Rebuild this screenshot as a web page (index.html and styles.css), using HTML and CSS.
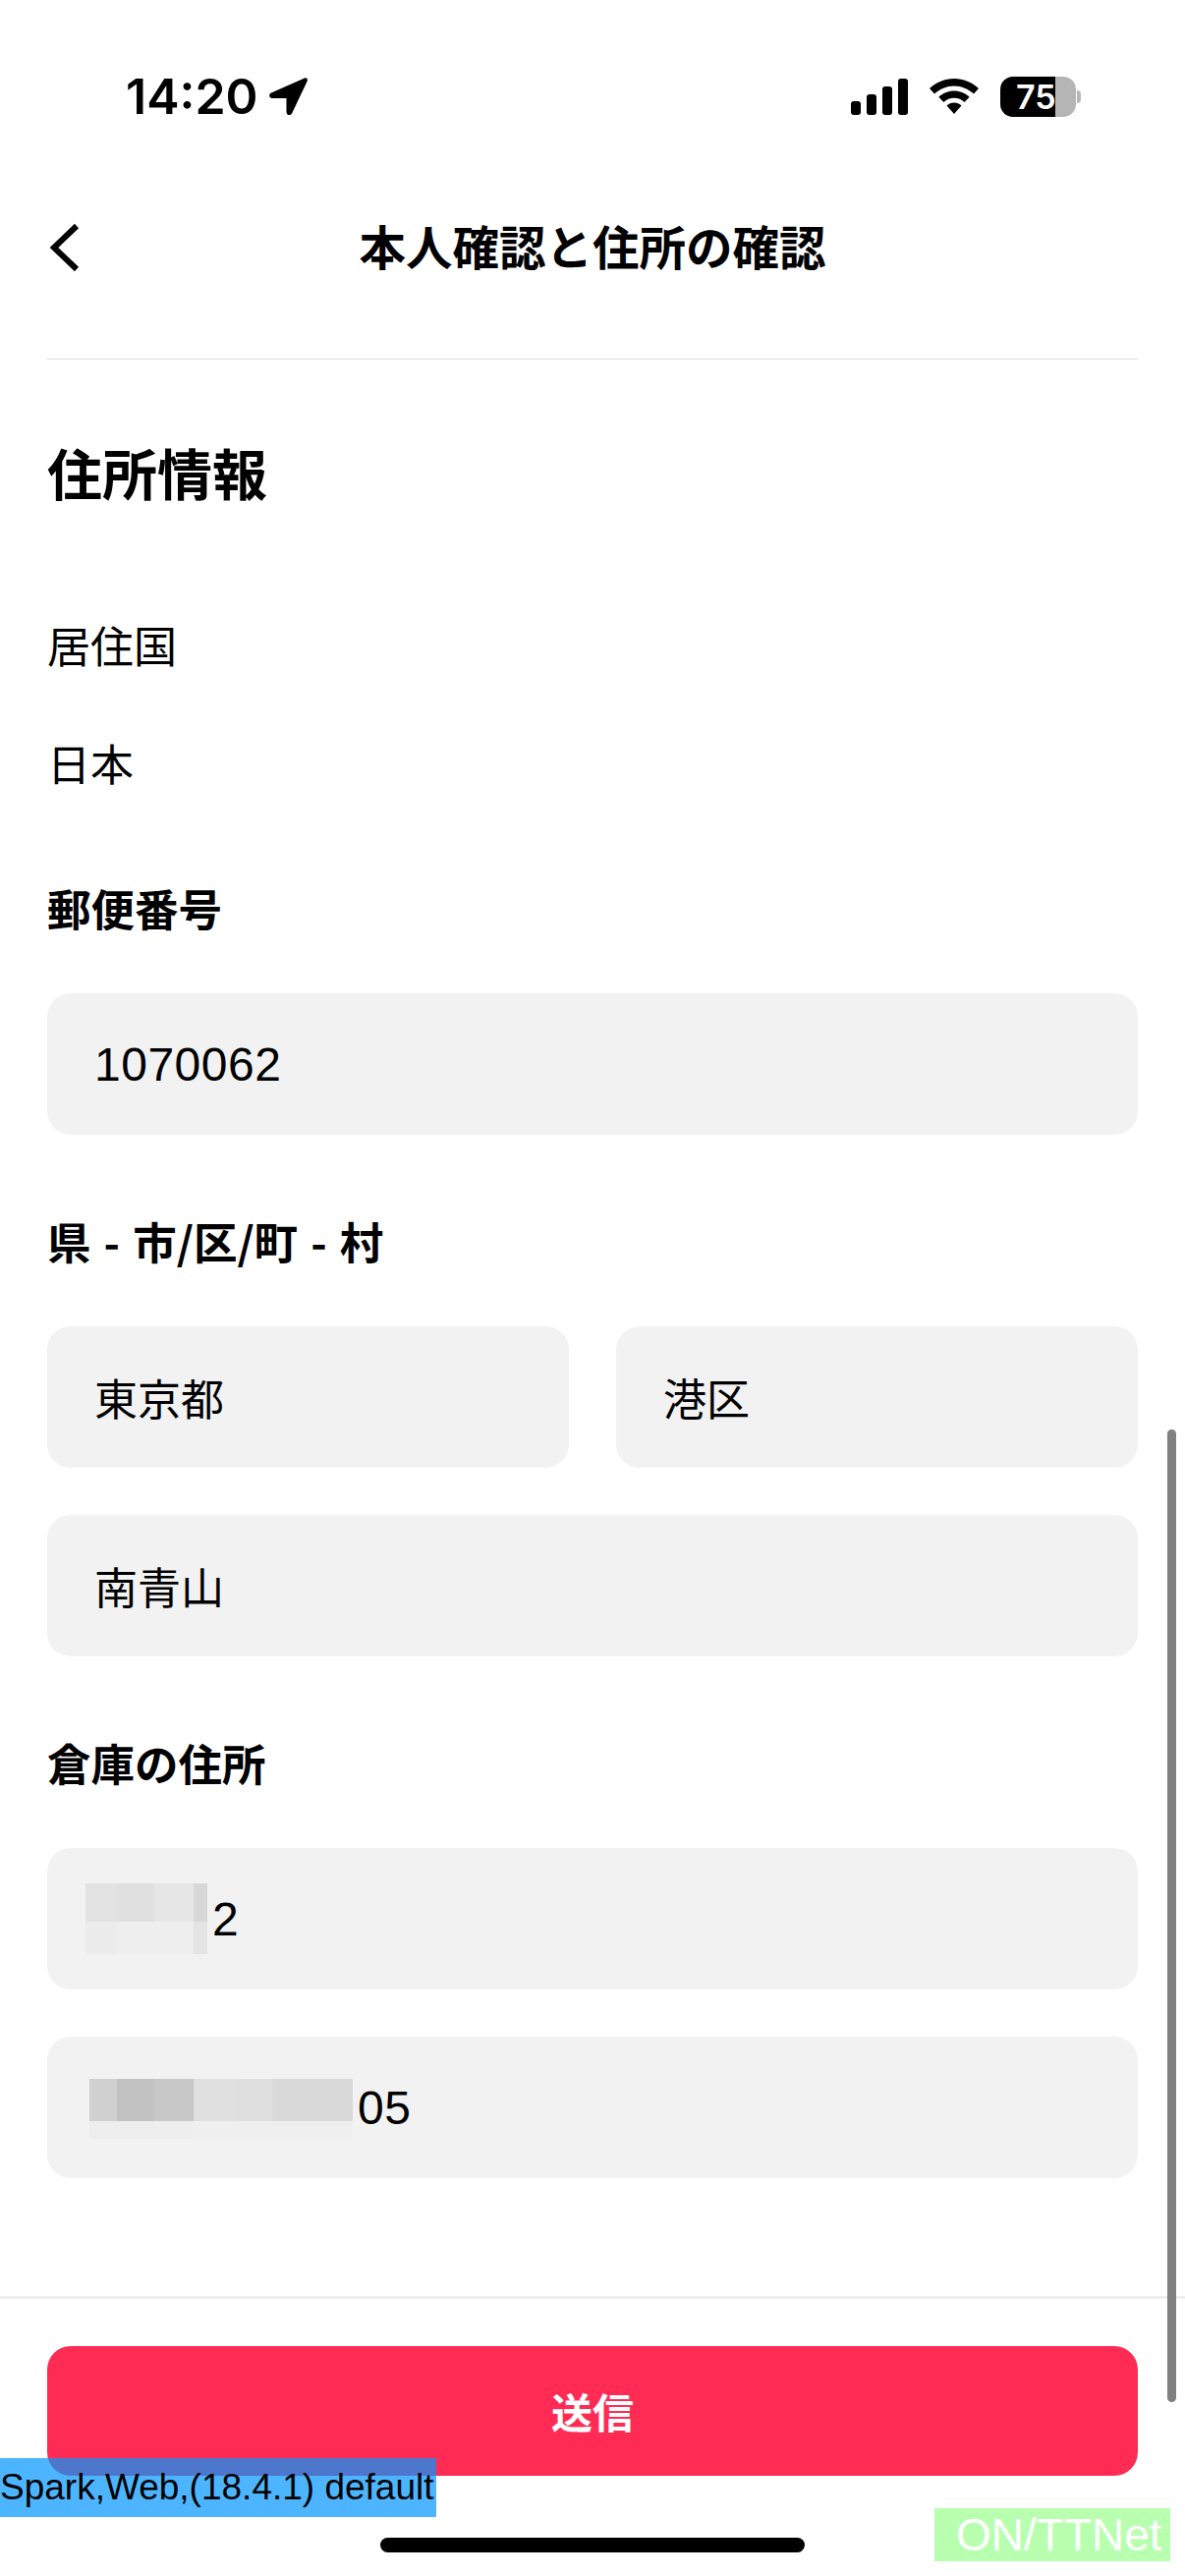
FILE: index.html
```html
<!DOCTYPE html>
<html lang="ja">

    <head>
        <meta charset="UTF-8">
        <meta name="viewport" content="width=device-width, initial-scale=1.0">
        <title>本人確認と住所の確認</title>
        <link rel="stylesheet" href="styles.css">
    </head>

    <body>
        <div class="page">
            <div class="status">
                <div class="status-left">
                    <span class="time">14:20</span>
                    <svg class="arrow" viewBox="0 0 39 38"><path d="M36 .5 2 15.500C-.8 16.800-.2 21 2.800 21H17.500v14c0 3.500 4.500 4.300 5.800 1L38.700 3.500C39.500 1.500 38-.4 36 .5z"/></svg>
                </div>
                <div class="status-right">
                    <svg class="signal" viewBox="0 0 58 37">
                        <rect x="0" y="23" width="10" height="14" rx="3"/>
                        <rect x="16" y="16" width="10" height="21" rx="3"/>
                        <rect x="32" y="8" width="10" height="29" rx="3"/>
                        <rect x="48" y="0" width="10" height="37" rx="3"/>
                    </svg>
                    <svg class="wifi" viewBox="0 0 50 36">
                        <path d="M25 0C15.500 0 7 3.700 0 10l5 5.500C10.500 10.500 17.500 7.500 25 7.500s14.500 3 20 8l5-5.500C43 3.700 34.500 0 25 0z"/>
                        <path d="M25 12.500c-6 0-11.500 2.400-15.600 6.200l5 5.300c2.900-2.700 6.500-4.200 10.600-4.200s7.700 1.500 10.600 4.200l5-5.300C36.500 14.900 31 12.500 25 12.500z"/>
                        <path d="M25 24.500c-3 0-5.500 1-7.500 2.900L25 36l7.500-8.600c-2-1.900-4.500-2.900-7.500-2.900z"/>
                    </svg>
                    <div class="battery">
                        <div class="battery-body"><span class="battery-num">75</span></div>
                        <div class="battery-nub"></div>
                    </div>
                </div>
            </div>

            <div class="header">
                <svg class="back" viewBox="0 0 32 50"><path d="M28 3 5 25l23 22"/></svg>
                <div class="title">本人確認と住所の確認</div>
            </div>

            <div class="content">
                <h1 class="heading">住所情報</h1>
                <div class="plain">居住国</div>
                <div class="plain">日本</div>

                <div class="label">郵便番号</div>
                <div class="group">
                    <div class="field num">1070062</div>
                </div>

                <div class="label">県 - 市/区/町 - 村</div>
                <div class="group">
                    <div class="pair">
                        <div class="field">東京都</div>
                        <div class="field">港区</div>
                    </div>
                    <div class="field">南青山</div>
                </div>

                <div class="label">倉庫の住所</div>
                <div class="group">
                    <div class="field num masked-a"><span class="mosaic mosaic-a"></span>2</div>
                    <div class="field num masked-b"><span class="mosaic mosaic-b"></span>05</div>
                </div>
            </div>

            <div class="footer">
                <div class="submit">送信</div>
                <div class="home"></div>
            </div>

            <div class="scrollbar"></div>
            <div class="tag-spark">Spark,Web,(18.4.1) default</div>
            <div class="tag-net">ON/TTNet</div>
        </div>
    </body>

</html>
```

FILE: styles.css
```css
* {
    margin: 0;
    padding: 0;
    box-sizing: border-box;
}

body {
    background: #fff;
    color: #000;
    font-family: "Noto Sans CJK JP", "Liberation Sans", sans-serif;
}

.page {
    position: relative;
    display: flex;
    flex-direction: column;
    width: 1206px;
    height: 2622px;
    overflow: hidden;
}

/* status bar */
.status {
    display: flex;
    justify-content: space-between;
    align-items: center;
    height: 196px;
    padding: 0 106px 0 128px;
}

.status-left {
    display: flex;
    align-items: center;
    gap: 11px;
}

.time {
    font-family: Inter, sans-serif;
    font-size: 50px;
    font-weight: 600;
    line-height: 60px;
}

.arrow {
    width: 39px;
    height: 38px;
}

.status-right {
    display: flex;
    align-items: center;
    gap: 22px;
}

.signal {
    width: 58px;
    height: 37px;
}

.wifi {
    width: 50px;
    height: 36px;
}

.battery {
    display: flex;
    align-items: center;
    gap: 1px;
}

.battery-body {
    display: flex;
    align-items: center;
    width: 77px;
    height: 41px;
    padding-left: 16px;
    border-radius: 13px;
    background: linear-gradient(90deg, #000 56px, #b5b5b5 56px);
}

.battery-num {
    color: #fff;
    font-family: Inter, sans-serif;
    font-size: 34px;
    font-weight: 600;
    line-height: 41px;
}

.battery-nub {
    width: 4px;
    height: 13px;
    border-radius: 0 4px 4px 0;
    background: #b5b5b5;
}

/* nav */
.header {
    position: relative;
    display: flex;
    justify-content: center;
    align-items: center;
    height: 108px;
    margin: 0 48px 61px;
}

.back {
    position: absolute;
    top: 31px;
    left: 2px;
    width: 32px;
    height: 50px;
    fill: none;
    stroke: #000;
    stroke-width: 6;
}

.title {
    font-size: 47.5px;
    font-weight: 700;
    line-height: 64px;
}

/* form */
.content {
    flex: 1;
    margin: 0 48px;
    border-top: 1px solid #ddd;
}

.heading {
    margin: 78px 0 110px;
    font-size: 56px;
    font-weight: 700;
    line-height: 72px;
}

.plain {
    margin-bottom: 60px;
    font-size: 44px;
    line-height: 60px;
}

.label {
    margin-bottom: 57px;
    font-size: 44.5px;
    font-weight: 700;
    line-height: 60px;
    word-spacing: 3px;
}

.plain + .label {
    margin-top: 88px;
}

.group {
    display: flex;
    flex-direction: column;
    gap: 48px;
    margin-bottom: 78px;
}

.pair {
    display: grid;
    grid-template-columns: 1fr 1fr;
    gap: 48px;
}

.field {
    display: flex;
    align-items: center;
    height: 144px;
    padding: 0 48px;
    border-radius: 24px;
    background: #f2f2f2;
    font-size: 44px;
}

.num {
    font-family: "Liberation Sans", sans-serif;
    font-size: 48px;
    letter-spacing: .5px;
}

.masked-a {
    padding-left: 39px;
}

.masked-b {
    padding-left: 43px;
}

.mosaic {
    flex: none;
    margin-right: 5px;
    background-repeat: no-repeat;
}

.mosaic-a {
    width: 124px;
    height: 72px;
    background-image:
        linear-gradient(90deg, #e3e3e3 32px, #e0e0e0 32px, #e0e0e0 70px, #e6e6e6 70px, #e6e6e6 110px, #d8d8d8 110px),
        linear-gradient(90deg, #ececec 32px, #eee 32px, #eee 110px, #e4e4e4 110px);
    background-size: 100% 39px, 100% 33px;
    background-position: 0 0, 0 39px;
}

.mosaic-b {
    width: 268px;
    height: 61px;
    margin-top: 2px;
    background-image:
        linear-gradient(90deg, #d0d0d0 28px, #c2c2c2 28px, #c2c2c2 66px, #c8c8c8 66px, #c8c8c8 106px, #e0e0e0 106px, #e0e0e0 149px, #dfdfdf 149px, #dfdfdf 186px, #dadada 186px),
        linear-gradient(90deg, #eee 106px, #f0f0f0 106px, #f0f0f0 186px, #efefef 186px);
    background-size: 100% 43px, 100% 18px;
    background-position: 0 0, 0 43px;
}

/* bottom */
.footer {
    height: 285px;
    padding-top: 48px;
    border-top: 3px solid #efefef;
}

.submit {
    display: flex;
    justify-content: center;
    align-items: center;
    height: 132px;
    padding-bottom: 2px;
    margin: 0 48px;
    border-radius: 24px;
    background: #fe2c55;
    color: #fff;
    font-size: 42px;
    font-weight: 700;
}

.home {
    width: 432px;
    height: 15px;
    margin: 63px auto 0;
    border-radius: 8px;
    background: #000;
}

.scrollbar {
    position: absolute;
    top: 1455px;
    left: 1188px;
    width: 9px;
    height: 990px;
    border-radius: 5px;
    background: #808080;
}

.tag-spark {
    position: absolute;
    top: 2502px;
    left: 0;
    width: 444px;
    height: 60px;
    background: rgba(4, 151, 255, .71);
    font-family: "Liberation Sans", sans-serif;
    font-size: 37px;
    line-height: 60px;
    white-space: nowrap;
}

.tag-net {
    position: absolute;
    top: 2553px;
    left: 951px;
    width: 240px;
    height: 54px;
    padding-left: 22px;
    background: #b8ffb0;
    color: #fff;
    font-family: "Liberation Sans", sans-serif;
    font-size: 46px;
    line-height: 54px;
    white-space: nowrap;
}
```
